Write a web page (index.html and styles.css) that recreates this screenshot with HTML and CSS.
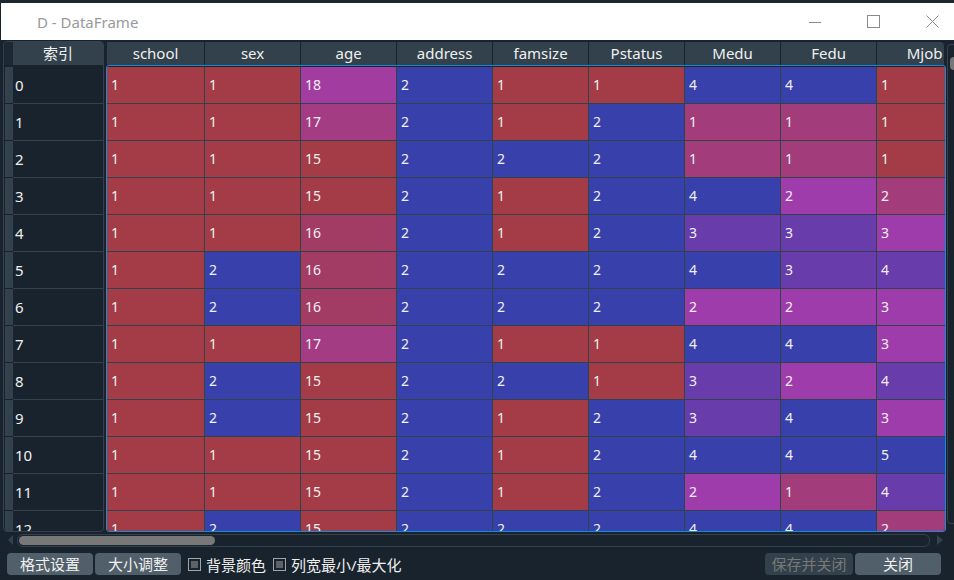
FILE: index.html
```html
<!DOCTYPE html>
<html lang="zh">
<head>
    <meta charset="UTF-8">
    <title>D - DataFrame</title>
    <link rel="stylesheet" href="styles.css">
</head>
<body>
    <div class="topline"></div>
    <div class="titlebar">
        <div class="title">D - DataFrame</div>
        <div class="ctl"><svg width="14" height="14"><path d="M1 7.5h12" stroke="#8a8a8a"/></svg></div>
        <div class="ctl"><svg width="13" height="13"><rect x=".5" y=".5" width="12" height="12" fill="none" stroke="#8a8a8a"/></svg></div>
        <div class="ctl close"><svg width="13" height="13"><path d="M.5 .5l12 12M12.5 .5l-12 12" stroke="#8a8a8a"/></svg></div>
    </div>

    <div class="tables">
        <div class="idx">
            <div class="idx-head">
                <div class="corner"></div>
                <div class="hcell">索引</div>
            </div>
            <div class="idx-rows" id="idxRows"></div>
        </div>
        <div class="dt">
            <div class="dt-head" id="dtHead"></div>
            <div class="dt-view" id="dtView"></div>
        </div>
        <div class="vs"><div class="vs-handle"></div></div>
    </div>

    <div class="hs">
        <div class="arrow-left"></div>
        <div class="track"><div class="handle"></div></div>
        <div class="arrow-right"></div>
    </div>

    <div class="bar">
        <div class="btn">格式设置</div>
        <div class="btn">大小调整</div>
        <div class="chk"><span class="box"></span>背景颜色</div>
        <div class="chk"><span class="box"></span>列宽最小/最大化</div>
        <div class="spacer"></div>
        <div class="btn off">保存并关闭</div>
        <div class="btn last">关闭</div>
    </div>

    <script>
        var cols = [['school', 1, 2], ['sex', 1, 2], ['age', 15, 22], ['address', 1, 2], ['famsize', 1, 2],
                    ['Pstatus', 1, 2], ['Medu', 0, 4], ['Fedu', 0, 4], ['Mjob', 1, 5]];
        var rows = [
            [1, 1, 18, 2, 1, 1, 4, 4, 1],
            [1, 1, 17, 2, 1, 2, 1, 1, 1],
            [1, 1, 15, 2, 2, 2, 1, 1, 1],
            [1, 1, 15, 2, 1, 2, 4, 2, 2],
            [1, 1, 16, 2, 1, 2, 3, 3, 3],
            [1, 2, 16, 2, 2, 2, 4, 3, 4],
            [1, 2, 16, 2, 2, 2, 2, 2, 3],
            [1, 1, 17, 2, 1, 1, 4, 4, 3],
            [1, 2, 15, 2, 2, 1, 3, 2, 4],
            [1, 2, 15, 2, 1, 2, 3, 4, 3],
            [1, 1, 15, 2, 1, 2, 4, 4, 5],
            [1, 1, 15, 2, 1, 2, 2, 1, 4],
            [1, 2, 15, 2, 2, 2, 4, 4, 2]
        ];

        function hsv(h, s, v) {
            var i = Math.floor(h * 6), f = h * 6 - i;
            var p = v * (1 - s), q = v * (1 - f * s), t = v * (1 - (1 - f) * s);
            return [[v, t, p], [q, v, p], [p, v, t], [p, q, v], [t, p, v], [v, p, q]][i % 6];
        }

        // same scale as the spyder editor: blue for max, red for min, 60% over the background
        function cellColor(v, lo, hi) {
            var h = 0.66 + 0.33 * (hi - v) / (hi - lo);
            var bg = [25, 35, 45];
            var rgb = hsv(h, 0.7, 1).map(function (c, i) { return Math.round(0.6 * c * 255 + 0.4 * bg[i]); });
            return 'rgb(' + rgb.join(',') + ')';
        }

        var head = document.getElementById('dtHead');
        cols.forEach(function (c) {
            var d = document.createElement('div');
            d.className = 'hd';
            d.textContent = c[0];
            head.appendChild(d);
        });

        var idx = document.getElementById('idxRows');
        var view = document.getElementById('dtView');
        rows.forEach(function (r, n) {
            var ir = document.createElement('div');
            ir.className = 'idx-row';
            ir.innerHTML = '<div class="vh"></div><div class="ic">' + n + '</div>';
            idx.appendChild(ir);

            var row = document.createElement('div');
            row.className = 'dt-row';
            r.forEach(function (v, i) {
                var cell = document.createElement('div');
                cell.className = 'cell';
                cell.textContent = v;
                cell.style.background = cellColor(v, cols[i][1], cols[i][2]);
                row.appendChild(cell);
            });
            view.appendChild(row);
        });
    </script>
</body>
</html>
```

FILE: styles.css
```css
* { box-sizing: border-box; }

body {
    margin: 0;
    width: 954px;
    height: 580px;
    overflow: hidden;
    background: #19232d;
    color: #f0f0f0;
    font-family: "Noto Sans", "Noto Sans CJK SC", sans-serif;
}

.topline { height: 3px; background: #1d2731; }

.titlebar {
    height: 37px;
    margin-left: 1px;
    background: #ffffff;
    display: flex;
    align-items: center;
}
.title {
    flex: 1;
    padding-left: 36px;
    font-size: 15px;
    color: #999999;
}
.ctl {
    width: 58px;
    height: 37px;
    display: flex;
    align-items: center;
    justify-content: center;
}
.ctl.close { width: 52px; justify-content: flex-start; padding-left: 24px; }

/* tables */
.tables {
    display: flex;
    height: 492px;
    padding: 1px 0 0 3px;
}

.idx {
    width: 102px;
    height: 491px;
    border: 1px solid #32414b;
    border-radius: 4px;
    padding-left: 1px;
    overflow: hidden;
}
.idx-head { display: flex; height: 23px; }
.idx-head .corner { width: 8px; background: #1e2832; }
.idx-head .hcell {
    flex: 1;
    background: #32414b;
    text-align: center;
    font-size: 15px;
    line-height: 23px;
}
.idx-rows { padding-top: 2px; }
.idx-row { display: flex; height: 37px; }
.idx-row .vh { width: 8px; background: #32414b; border-bottom: 1px solid #19232d; }
.idx-row .ic {
    flex: 1;
    border-bottom: 1px solid #32414b;
    padding-left: 2px;
    font-size: 15px;
    line-height: 36px;
}

.dt {
    width: 841px;
    margin-left: 1px;
    display: flex;
    flex-direction: column;
}
.dt-head {
    display: flex;
    height: 23px;
    margin: 1px 2px 0 2px;
    overflow: hidden;
    border-radius: 0 4px 0 0;
}
.hd {
    flex: none;
    width: 96px;
    border-right: 1px solid #19232d;
    background: #32414b;
    text-align: center;
    font-size: 15px;
    line-height: 23px;
}
.hd:first-child { width: 98px; }
.dt-view {
    height: 467px;
    margin-left: 1px;
    border: 1px solid #148cd2;
    border-radius: 3px;
    padding-top: 1px;
    overflow: hidden;
}
.dt-row { display: flex; height: 37px; }
.cell {
    flex: none;
    width: 96px;
    border-right: 1px solid #32414b;
    border-bottom: 1px solid #32414b;
    padding-left: 4px;
    font-size: 14px;
    line-height: 36px;
    white-space: nowrap;
}
.cell:first-child { width: 98px; }

.vs {
    width: 7px;
    height: 480px;
    margin: 3px 0 0 1px;
    border: 1px solid #32414b;
    border-right: none;
    border-radius: 4px 0 0 4px;
}
.vs-handle {
    height: 13px;
    margin: 12px 0 0 2px;
    background: #787878;
    border-radius: 4px 0 0 4px;
}

/* horizontal scrollbar */
.hs {
    display: flex;
    align-items: center;
    height: 14px;
    margin-top: 1px;
    padding-left: 8px;
}
.arrow-left {
    border-right: 5px solid #32414b;
    border-top: 5px solid transparent;
    border-bottom: 5px solid transparent;
}
.track {
    width: 913px;
    height: 13px;
    margin-left: 4px;
    border: 1px solid #32414b;
    border-radius: 6px;
    padding: 1px;
}
.handle { width: 196px; height: 100%; background: #787878; border-radius: 5px; }
.arrow-right {
    margin-left: 7px;
    border-left: 6px solid #32414b;
    border-top: 5px solid transparent;
    border-bottom: 5px solid transparent;
}

/* bottom buttons */
.bar {
    display: flex;
    align-items: center;
    height: 22px;
    margin-top: 6px;
    padding: 0 13px 0 7px;
    font-size: 15px;
}
.btn {
    width: 86px;
    height: 22px;
    margin-right: 2px;
    background: #505f69;
    border-radius: 4px;
    text-align: center;
    line-height: 22px;
}
.btn.off { width: 88px; background: #32414b; color: #787878; }
.btn.last { width: 86px; margin-right: 0; }
.chk { display: flex; align-items: center; margin-left: 5px; margin-right: 2px; }
.box {
    width: 13px;
    height: 13px;
    margin-right: 5px;
    border: 1px solid #9da4aa;
    background: #5d6266;
    box-shadow: inset 0 0 0 2px #19232d;
}
.spacer { flex: 1; }
```
